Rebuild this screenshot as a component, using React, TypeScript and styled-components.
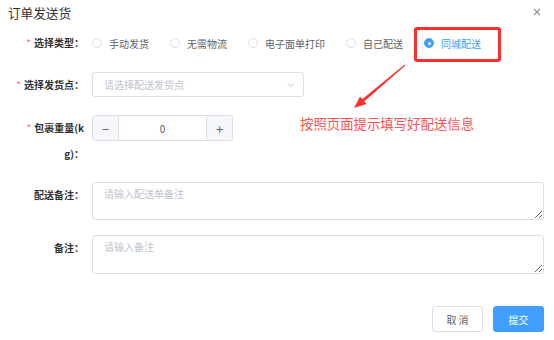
import React from "react";
import styled, { createGlobalStyle } from "styled-components";

const GlobalStyle = createGlobalStyle`
    html, body {
        margin: 0;
        padding: 0;
        background: #fff;
    }
    body {
        font-family: "Noto Sans CJK SC", "Noto Sans", "Liberation Sans", sans-serif;
    }
`;

const Dialog = styled.div`
    position: relative;
    width: 554px;
    height: 340px;
    background: #fff;
    display: flex;
    flex-direction: column;
    overflow: hidden;

    & > * {
        flex-shrink: 0;
    }
`;

const Header = styled.div`
    height: 30px;
    box-sizing: border-box;
    padding: 4px 12px 0 8px;
    display: flex;
    justify-content: space-between;
    align-items: flex-start;
`;

const Title = styled.span`
    font-size: 12.6px;
    line-height: 18px;
    color: #303133;
`;

const CloseButton = styled.button`
    border: 0;
    background: none;
    padding: 0;
    margin-top: 3px;
    width: 10px;
    height: 10px;
    display: flex;
    align-items: center;
    justify-content: center;
    cursor: pointer;
`;

const Form = styled.div`
    display: flex;
    flex-direction: column;
`;

const Item = styled.div<{ $gap?: number }>`
    display: flex;
    align-items: flex-start;
    margin-bottom: ${p => p.$gap ?? 16}px;
    padding-right: 10px;
`;

const Label = styled.label<{ $required?: boolean }>`
    flex: none;
    box-sizing: border-box;
    width: 76px;
    margin-left: 16px;
    padding-right: 8px;
    text-align: right;
    font-size: 10px;
    line-height: 26px;
    font-weight: 700;
    color: #303133;
    white-space: nowrap;

    &::before {
        content: ${p => (p.$required ? '"*"' : '""')};
        color: #f56c6c;
        margin-right: 3px;
        font-weight: 400;
    }
`;

const Content = styled.div`
    flex: 1;
    min-width: 0;
`;

const RadioGroup = styled.div`
    display: flex;
    align-items: center;
    height: 26px;
`;

const RadioOption = styled.label<{ $checked?: boolean }>`
    display: flex;
    align-items: center;
    margin-right: 21px;
    font-size: 10px;
    color: ${p => (p.$checked ? "#409eff" : "#606266")};
    cursor: pointer;
`;

const RadioDot = styled.span<{ $checked?: boolean }>`
    box-sizing: border-box;
    width: 10px;
    height: 10px;
    border-radius: 50%;
    margin-right: 7px;
    border: 1px solid ${p => (p.$checked ? "#409eff" : "#dcdfe6")};
    background: ${p => (p.$checked ? "#409eff" : "#fff")};
    display: flex;
    align-items: center;
    justify-content: center;

    &::after {
        content: "";
        width: 3px;
        height: 3px;
        border-radius: 50%;
        background: #fff;
        display: ${p => (p.$checked ? "block" : "none")};
    }
`;

const Select = styled.div`
    box-sizing: border-box;
    width: 212px;
    height: 25px;
    border: 1px solid #dcdfe6;
    border-radius: 3px;
    padding: 0 8px 0 11px;
    display: flex;
    align-items: center;
    justify-content: space-between;
    font-size: 10px;
    color: #c0c4cc;
`;

const Stepper = styled.div`
    box-sizing: border-box;
    width: 141px;
    height: 26px;
    border: 1px solid #dcdfe6;
    border-radius: 3px;
    display: flex;
    overflow: hidden;
`;

const StepButton = styled.span<{ $side: "left" | "right" }>`
    width: 25px;
    background: #f5f7fa;
    color: #606266;
    display: flex;
    align-items: center;
    justify-content: center;
    font-size: 13px;
    ${p => (p.$side === "left" ? "border-right" : "border-left")}: 1px solid #dcdfe6;
`;

const StepValue = styled.span`
    flex: 1;
    display: flex;
    align-items: center;
    justify-content: center;
    font-size: 10px;
    color: #606266;
`;

const TextArea = styled.textarea<{ $h: number }>`
    display: block;
    box-sizing: border-box;
    width: 100%;
    height: ${p => p.$h}px;
    border: 1px solid #dcdfe6;
    border-radius: 3px;
    padding: 3px 11px;
    font-family: inherit;
    font-size: 10px;
    line-height: 15px;
    color: #606266;
    resize: vertical;
    outline: none;

    &::placeholder {
        color: #c0c4cc;
    }
`;

const Footer = styled.div`
    display: flex;
    justify-content: flex-end;
    gap: 10px;
    padding: 32px 10px 0 0;
`;

const Button = styled.button<{ $primary?: boolean }>`
    box-sizing: border-box;
    width: 51px;
    height: 26px;
    border-radius: 3px;
    font-family: inherit;
    font-size: 10px;
    cursor: pointer;
    border: 1px solid ${p => (p.$primary ? "#409eff" : "#dcdfe6")};
    background: ${p => (p.$primary ? "#409eff" : "#fff")};
    color: ${p => (p.$primary ? "#fff" : "#606266")};
`;

const Highlight = styled.div`
    position: absolute;
    left: 414px;
    top: 27px;
    width: 87px;
    height: 35px;
    box-sizing: border-box;
    border: 3px solid #ff2e2e;
    border-radius: 3px;
    pointer-events: none;
`;

const Arrow = styled.svg`
    position: absolute;
    left: 340px;
    top: 60px;
`;

const Note = styled.div`
    position: absolute;
    left: 300px;
    top: 114px;
    font-size: 13.4px;
    line-height: 18px;
    color: #ff5252;
    white-space: nowrap;
`;

const types = ["手动发货", "无需物流", "电子面单打印", "自己配送", "同城配送"];

export default function App() {
    const selected = "同城配送";
    return (
        <Dialog>
            <GlobalStyle />
            <Header>
                <Title>订单发送货</Title>
                <CloseButton aria-label="关闭">
                    <svg width="8" height="8" viewBox="0 0 8 8">
                        <path d="M1 1L7 7M7 1L1 7" stroke="#909399" strokeWidth="1.1" />
                    </svg>
                </CloseButton>
            </Header>
            <Form>
                <Item $gap={16}>
                    <Label $required>选择类型：</Label>
                    <Content>
                        <RadioGroup>
                            {types.map(t => (
                                <RadioOption key={t} $checked={t === selected}>
                                    <RadioDot $checked={t === selected} />
                                    {t}
                                </RadioOption>
                            ))}
                        </RadioGroup>
                    </Content>
                </Item>
                <Item $gap={17}>
                    <Label $required>选择发货点：</Label>
                    <Content>
                        <Select>
                            请选择配送发货点
                            <svg width="8" height="6" viewBox="0 0 8 6">
                                <path d="M1 1.5L4 4.5L7 1.5" fill="none" stroke="#c0c4cc" strokeWidth="1" />
                            </svg>
                        </Select>
                    </Content>
                </Item>
                <Item $gap={15}>
                    <Label $required>
                        包裹重量(k
                        <br />
                        g)：
                    </Label>
                    <Content>
                        <Stepper>
                            <StepButton $side="left">−</StepButton>
                            <StepValue>0</StepValue>
                            <StepButton $side="right">+</StepButton>
                        </Stepper>
                    </Content>
                </Item>
                <Item $gap={15}>
                    <Label>配送备注：</Label>
                    <Content>
                        <TextArea $h={38} placeholder="请输入配送单备注" />
                    </Content>
                </Item>
                <Item $gap={0}>
                    <Label>备注：</Label>
                    <Content>
                        <TextArea $h={39} placeholder="请输入备注" />
                    </Content>
                </Item>
            </Form>
            <Footer>
                <Button>取 消</Button>
                <Button $primary>提交</Button>
            </Footer>

            <Highlight />
            <Arrow width="70" height="52" viewBox="0 0 70 52">
                <polygon
                    points="65.3,5.4 24.2,41.4 26.4,44.1 14,48 20,36.5 22.2,39.2 64.7,4.6"
                    fill="#ff2e2e"
                />
            </Arrow>
            <Note>按照页面提示填写好配送信息</Note>
        </Dialog>
    );
}
